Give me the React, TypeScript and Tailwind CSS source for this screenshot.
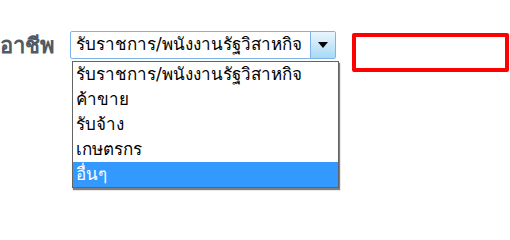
import React from "react";

const items = [
  "รับราชการ/พนังงานรัฐวิสาหกิจ",
  "ค้าขาย",
  "รับจ้าง",
  "เกษตรกร",
  "อื่นๆ",
];

export default function App() {
  return (
    <div className="w-[510px] h-[218px] bg-white overflow-hidden relative" style={{ fontFamily: "Tahoma, 'DejaVu Sans', sans-serif" }}>
      <div className="flex items-start pt-[31px]">
        <div className="w-[70px] h-[29px] flex items-center text-[22px] font-bold text-[#4f5a66] leading-normal">อาชีพ</div>
        <div className="relative">
          <div className="w-[266px] h-[28px] border border-[#7eb4ea] rounded-[2px] flex items-center bg-white">
            <div className="flex-1 pl-[5px] text-[17px] text-black leading-normal whitespace-nowrap">{items[0]}</div>
            <div className="w-[25px] h-[26px] border-l border-[#7eb4ea] bg-gradient-to-b from-[#eaf6fd] to-[#a7d9f5] flex items-center justify-center rounded-r-[1px]">
              <svg width="10" height="6" viewBox="0 0 10 6"><path d="M0 0H10L5 6Z" fill="#000" /></svg>
            </div>
          </div>
          <div className="absolute left-[2px] top-[30px] w-[267px] border border-[#646464] bg-white shadow-[1px_2px_1px_rgba(0,0,0,0.5)]">
            {items.map((t, i) => (
              <div
                key={t}
                className={
                  "h-[25px] flex items-center pl-[3px] text-[17px] leading-normal whitespace-nowrap " +
                  (i === 4 ? "bg-[#3399ff] text-white" : "text-black")
                }
              >
                {t}
              </div>
            ))}
          </div>
        </div>
        <div className="ml-[16px] mt-[2px] w-[157px] h-[39px] border-[4px] border-[#ff0000] rounded-[2px]" />
      </div>
    </div>
  );
}
